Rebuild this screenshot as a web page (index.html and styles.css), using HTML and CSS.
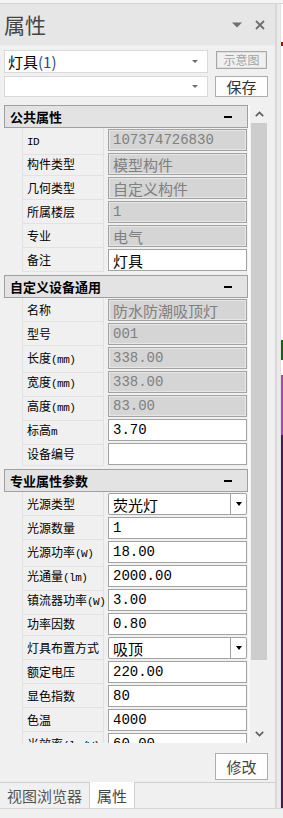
FILE: index.html
```html
<!doctype html>
<html lang="zh-CN">
  <head>
    <meta charset="UTF-8" />
    <title>属性</title>
    <link rel="stylesheet" href="styles.css">
  </head>
  <body>
    <div class="topbar"></div>
    <div class="window">
      <div class="panel">
        <div class="caption">
          <span class="caption-title">属性</span>
          <span class="caption-tools">
            <svg class="ico" width="10" height="6" viewBox="0 0 10 6"><path d="M0 0.5h10L5 5.5z" fill="#6f6f6f"/></svg>
            <svg class="ico" width="10" height="10" viewBox="0 0 10 10"><path d="M1 1l8 8M9 1l-8 8" stroke="#6f6f6f" stroke-width="1.8" fill="none"/></svg>
          </span>
        </div>

        <div class="toolbar">
          <div class="combo"><span>灯具<span class="count">(1)</span></span><i class="combo-arrow"></i></div>
          <button class="btn btn-disabled">示意图</button>
          <div class="combo"><span></span><i class="combo-arrow"></i></div>
          <button class="btn">保存</button>
        </div>

        <div class="grid-area">
          <div class="grid">
            <!-- 公共属性 -->
            <div class="section">
              <div class="section-head"><span>公共属性</span><i class="collapse"></i></div>
              <div class="row"><div></div><div class="label"><span class="lat">ID</span></div><div class="cell"><div class="val ro">107374726830</div></div></div>
              <div class="row"><div></div><div class="label">构件类型</div><div class="cell"><div class="val ro zh">模型构件</div></div></div>
              <div class="row"><div></div><div class="label">几何类型</div><div class="cell"><div class="val ro zh">自定义构件</div></div></div>
              <div class="row"><div></div><div class="label">所属楼层</div><div class="cell"><div class="val ro">1</div></div></div>
              <div class="row"><div></div><div class="label">专业</div><div class="cell"><div class="val ro zh">电气</div></div></div>
              <div class="row"><div></div><div class="label">备注</div><div class="cell"><div class="val rw zh">灯具</div></div></div>
            </div>

            <!-- 自定义设备通用 -->
            <div class="section">
              <div class="section-head"><span>自定义设备通用</span><i class="collapse"></i></div>
              <div class="row"><div></div><div class="label">名称</div><div class="cell"><div class="val ro zh">防水防潮吸顶灯</div></div></div>
              <div class="row"><div></div><div class="label">型号</div><div class="cell"><div class="val ro">001</div></div></div>
              <div class="row"><div></div><div class="label">长度<span class="lat">(mm)</span></div><div class="cell"><div class="val ro">338.00</div></div></div>
              <div class="row"><div></div><div class="label">宽度<span class="lat">(mm)</span></div><div class="cell"><div class="val ro">338.00</div></div></div>
              <div class="row"><div></div><div class="label">高度<span class="lat">(mm)</span></div><div class="cell"><div class="val ro">83.00</div></div></div>
              <div class="row"><div></div><div class="label">标高<span class="lat">m</span></div><div class="cell"><div class="val rw">3.70</div></div></div>
              <div class="row"><div></div><div class="label">设备编号</div><div class="cell"><div class="val rw"></div></div></div>
            </div>

            <!-- 专业属性参数 -->
            <div class="section">
              <div class="section-head"><span>专业属性参数</span><i class="collapse"></i></div>
              <div class="row"><div></div><div class="label">光源类型</div><div class="cell"><div class="val rw zh select"><span>荧光灯</span><span class="select-btn"><i></i></span></div></div></div>
              <div class="row"><div></div><div class="label">光源数量</div><div class="cell"><div class="val rw">1</div></div></div>
              <div class="row"><div></div><div class="label">光源功率<span class="lat">(W)</span></div><div class="cell"><div class="val rw">18.00</div></div></div>
              <div class="row"><div></div><div class="label">光通量<span class="lat">(lm)</span></div><div class="cell"><div class="val rw">2000.00</div></div></div>
              <div class="row"><div></div><div class="label">镇流器功率<span class="lat">(W)</span></div><div class="cell"><div class="val rw">3.00</div></div></div>
              <div class="row"><div></div><div class="label">功率因数</div><div class="cell"><div class="val rw">0.80</div></div></div>
              <div class="row"><div></div><div class="label">灯具布置方式</div><div class="cell"><div class="val rw zh select"><span>吸顶</span><span class="select-btn"><i></i></span></div></div></div>
              <div class="row"><div></div><div class="label">额定电压</div><div class="cell"><div class="val rw">220.00</div></div></div>
              <div class="row"><div></div><div class="label">显色指数</div><div class="cell"><div class="val rw">80</div></div></div>
              <div class="row"><div></div><div class="label">色温</div><div class="cell"><div class="val rw">4000</div></div></div>
              <div class="row"><div></div><div class="label">光效率<span class="lat">(lm/W)</span></div><div class="cell"><div class="val rw">60.00</div></div></div>
            </div>
          </div>

          <div class="scrollbar">
            <div class="sb-btn">
              <svg width="9" height="6" viewBox="0 0 9 6"><path d="M0.8 5.2L4.5 1.5l3.7 3.7" stroke="#5f5f5f" stroke-width="1.7" fill="none"/></svg>
            </div>
            <div class="sb-thumb"></div>
            <div class="sb-track"></div>
            <div class="sb-btn">
              <svg width="9" height="6" viewBox="0 0 9 6"><path d="M0.8 0.8L4.5 4.5l3.7-3.7" stroke="#5f5f5f" stroke-width="1.7" fill="none"/></svg>
            </div>
          </div>
        </div>

        <div class="actions">
          <button class="btn btn-edit">修改</button>
        </div>

        <div class="tabs">
          <div class="tab">视图浏览器</div>
          <div class="tab active">属性</div>
        </div>
      </div>

      <div class="splitter"></div>

      <div class="canvas">
        <i class="mark red"></i>
        <i class="mark green"></i>
        <i class="mark magenta"></i>
        <i class="mark purple"></i>
      </div>
    </div>
    <div class="statusbar"></div>
  </body>
</html>
```

FILE: styles.css
```css
* {
  margin: 0;
  padding: 0;
  box-sizing: border-box;
}

html,
body {
  width: 283px;
  height: 818px;
  overflow: hidden;
}

body {
  font-family: "Noto Sans CJK SC", sans-serif;
  background: #f0f0f0;
  color: #000;
}

.topbar {
  height: 4px;
  background: #f4f4f4;
  border-bottom: 1px solid #d6d6d6;
}

.window {
  display: flex;
  height: 804px;
}

.panel {
  width: 275px;
  display: flex;
  flex-direction: column;
}

.splitter {
  width: 5px;
  border-left: 2px solid #d8d8d8;
  background: #ebebeb;
}

.canvas {
  width: 3px;
  background: #fff;
  border-left: 1px solid #e0e0e0;
  position: relative;
}

.statusbar {
  height: 10px;
  border-top: 1px solid #d6d6d6;
  background: #f0f0f0;
}

/* caption */
.caption {
  height: 41px;
  background: #e6e6e6;
  display: flex;
  align-items: center;
  justify-content: space-between;
  padding: 0 10px 0 4px;
}

.caption-title {
  font-size: 21px;
  line-height: 1;
  color: #454545;
}

.caption-tools {
  display: flex;
  align-items: center;
  gap: 13px;
}

.ico {
  display: block;
}

/* toolbar */
.toolbar {
  display: grid;
  grid-template-columns: 204px 53px;
  grid-template-rows: 23px 21px;
  column-gap: 7px;
  row-gap: 3px;
  padding: 5px 7px 0 4px;
}

.combo {
  background: #fff;
  border: 1px solid #d9d9d9;
  display: flex;
  align-items: center;
  justify-content: space-between;
  padding-left: 3px;
  font-size: 15px;
  line-height: 1;
}

.combo .count {
  color: #2c4a8c;
}

.combo-arrow {
  width: 0;
  height: 0;
  border-left: 3px solid transparent;
  border-right: 3px solid transparent;
  border-top: 3px solid #6d6d6d;
  margin-right: 9px;
}

.btn {
  font-family: inherit;
  background: #fdfdfd;
  border: 1px solid #adadad;
  color: #333;
  font-size: 15px;
  line-height: 1;
}

.btn-disabled {
  width: 51px;
  height: 18px;
  justify-self: center;
  align-self: start;
  margin-top: 1px;
  font-size: 12px;
  color: #a3a3a3;
  background: #f0f0f0;
  border: 1px solid #a8a8a8;
  box-shadow: inset 0 0 0 1px #e2e2e2;
}

/* property grid */
.grid-area {
  display: flex;
  height: 638px;
  margin: 8px 7px 0 4px;
  overflow: hidden;
}

.grid {
  width: 246px;
  border-right: 2px solid #fafafa;
}

.section + .section {
  margin-top: 3px;
}

.section-head {
  height: 23px;
  border: 1px solid #a0a0a0;
  background: #e3e3e3;
  display: flex;
  align-items: center;
  justify-content: space-between;
  padding: 0 15px 0 5px;
  font-size: 13px;
  font-weight: bold;
  line-height: 1;
}

.collapse {
  width: 8px;
  height: 2px;
  background: #000;
}

.row {
  display: grid;
  grid-template-columns: 18px 82px 144px;
  height: 24px;
}

.label {
  border: 1px solid #e2e2e2;
  border-top: none;
  padding-left: 4px;
  font-size: 12px;
  line-height: 23px;
  white-space: nowrap;
}

.lat {
  font-family: "Liberation Mono", monospace;
  font-size: 11px;
  letter-spacing: -0.5px;
}

.cell {
  padding: 1px 1px 1px 4px;
}

.val {
  height: 22px;
  border: 1px solid #a3a3a3;
  display: flex;
  align-items: center;
  padding-left: 4px;
  font-family: "Liberation Mono", "Noto Sans CJK SC", monospace;
  font-size: 14px;
  line-height: 1;
  white-space: nowrap;
}

.val.zh {
  font-family: "Noto Sans CJK SC", sans-serif;
  font-size: 15px;
}

.val.ro {
  background: #d5d5d5;
  color: #808080;
  box-shadow: inset 0 0 0 1px #e6e6e6;
}

.val.rw {
  background: #fff;
  color: #000;
}

.val.select {
  justify-content: space-between;
  padding-right: 0;
  border-radius: 2px;
}

.select-btn {
  width: 16px;
  height: 100%;
  border-left: 1px solid #a3a3a3;
  display: flex;
  align-items: center;
  justify-content: center;
}

.select-btn i {
  width: 0;
  height: 0;
  border-left: 3.5px solid transparent;
  border-right: 3.5px solid transparent;
  border-top: 4px solid #000;
}

/* scrollbar */
.scrollbar {
  width: 18px;
  display: flex;
  flex-direction: column;
  background: #f0f0f0;
}

.sb-btn {
  height: 18px;
  display: flex;
  align-items: center;
  justify-content: center;
}

.sb-thumb {
  height: 537px;
  margin: 0 1px;
  background: #cdcdcd;
}

.sb-track {
  flex: 1;
}

/* bottom */
.actions {
  display: flex;
  justify-content: flex-end;
  padding: 10px 7px 2px 0;
}

.btn-edit {
  width: 53px;
  height: 27px;
  color: #444;
}

.tabs {
  height: 26px;
  border-top: 1px solid #cfcfcf;
  display: flex;
}

.tab {
  height: 25px;
  padding: 0 7px;
  display: flex;
  align-items: center;
  font-size: 15px;
  line-height: 1;
  color: #555;
}

.tab.active {
  height: 26px;
  margin-top: -1px;
  background: #fff;
  border-left: 1px solid #cfcfcf;
  border-right: 1px solid #cfcfcf;
  color: #444;
}

/* canvas markers at the window edge */
.mark {
  position: absolute;
  left: 0;
  width: 2px;
}

.mark.red {
  top: 38px;
  height: 4px;
  background: #c80000;
}

.mark.green {
  top: 336px;
  height: 20px;
  background: #12d012;
  box-shadow: inset 0 0 0 1px #0a6a0a;
}

.mark.magenta {
  top: 371px;
  height: 60px;
  background: #b63cc0;
}

.mark.purple {
  top: 431px;
  bottom: 0;
  background: #4e1550;
}
```
